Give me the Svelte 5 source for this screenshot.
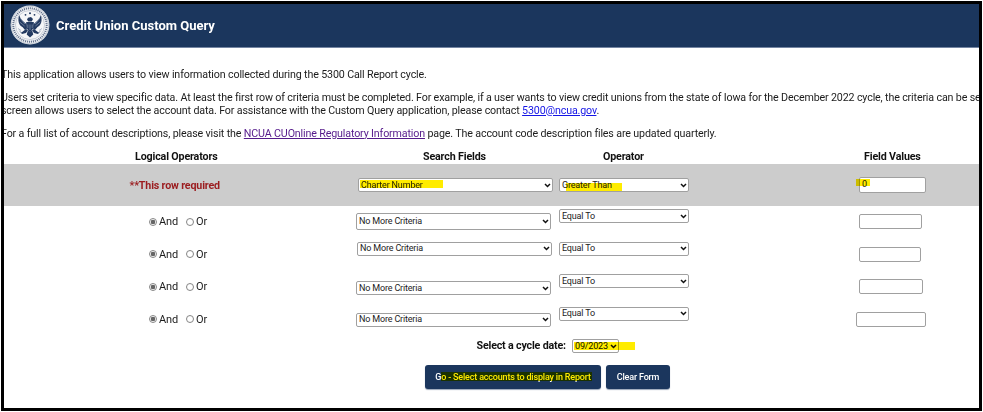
<script>
  const rows = [
    { field: 'No More Criteria', fx: 352, fy: 7, fh: 17, iw: 63, il: 4, iy: 8 },
    { field: 'No More Criteria', fx: 353, fy: 3, fh: 14, iw: 62, il: 4, iy: 8 },
    { field: 'No More Criteria', fx: 352, fy: 10, fh: 14, iw: 64, il: 4, iy: 8 },
    { field: 'No More Criteria', fx: 352, fy: 9, fh: 14, iw: 70, il: 1, iy: 8 }
  ];
</script>

{#snippet chevron()}
  <svg class="chev" width="7" height="5" viewBox="0 0 7 5"><path d="M1 1 3.5 3.5 6 1" fill="none" stroke="#111" stroke-width="1.5" /></svg>
{/snippet}

{#snippet dropdown(label)}
  <span class="label">{label}</span>{@render chevron()}
{/snippet}

<main>
  <header>
    <svg class="seal" width="40" height="40" viewBox="0 0 40 40">
      <circle cx="20" cy="20" r="19.4" fill="#f1f3f6" />
      <circle cx="20" cy="20" r="18.7" fill="none" stroke="#8995aa" stroke-width=".4" />
      <circle cx="20" cy="20" r="16.7" fill="none" stroke="#66748e" stroke-width="2" stroke-dasharray="1.1 .9" />
      <circle cx="20" cy="20" r="14.5" fill="#f5f6f8" stroke="#8a96aa" stroke-width=".4" />
      <g fill="#233a61">
        <circle cx="20" cy="8.3" r="1" /><circle cx="15.5" cy="9.8" r=".9" /><circle cx="24.5" cy="9.8" r=".9" />
        <path d="M9.2 10.2C7.5 15 8.5 20 12.7 22.3L15 25 17 23.5 16 18.7C13.4 16.7 10.5 14 9.2 10.2Z" />
        <path d="M30.8 10.2C32.5 15 31.5 20 27.3 22.3L25 25 23 23.5 24 18.7C26.6 16.7 29.5 14 30.8 10.2Z" />
        <path d="M18 12.7 21 12 23 14 21.7 16.5H18.3L17 14.6Z" />
        <path d="M16.2 17H23.8V22.8L20 27 16.2 22.8Z" />
        <path d="M18 25 20 26.5 22 25 23.3 29.5 20 32.5 16.7 29.5Z" />
        <path d="M16 24 11.5 27.5 8.5 25 12 29 16 28 18 25ZM24 24 28.5 27.5 31.5 25 28 29 24 28 22 25Z" />
      </g>
      <path d="M10 13 15 19M9.7 17 14.6 21M30 13 25 19M30.3 17 25.4 21M17.8 19.5V23M20 19.5V25M22.2 19.5V23M8 23.5 11 25.5M32 23.5 29 25.5" fill="none" stroke="#8c9bb4" stroke-width=".65" />
    </svg>
    <h1>Credit Union Custom Query</h1>
  </header>

  <section class="intro">
    <p>This application allows users to view information collected during the 5300 Call Report cycle.</p>
    <p>Users set criteria to view specific data. At least the first row of criteria must be completed. For example, if a user wants to view credit unions from the state of Iowa for the December 2022 cycle, the criteria can be se<br />screen allows users to select the account data. For assistance with the Custom Query application, please contact <a class="mail" href="#mail">5300@ncua.gov</a>.</p>
    <p>For a full list of account descriptions, please visit the <a class="visited" href="#info">NCUA CUOnline Regulatory Information</a> page. The account code description files are updated quarterly.</p>
  </section>

  <div class="row head">
    <b>Logical Operators</b><b>Search Fields</b><b>Operator</b><b>Field Values</b>
  </div>

  <div class="row required">
    <div class="note">**This row required</div>
    <div class="field"><div class="select" style="margin-left:2px;margin-top:14px">{@render dropdown('Charter Number')}<i class="hl" style="left:1px;top:1px;width:83px;height:8px"></i></div></div>
    <div class="op"><div class="select" style="margin-top:14px">{@render dropdown('Greater Than')}<i class="hl" style="left:6px;top:4px;width:56px;height:8px"></i></div></div>
    <div class="value"><div class="input" style="width:67px;height:16px;margin-left:4px;margin-top:13px">0<i class="hl" style="left:-4px;top:1px;width:14px;height:7px"></i></div></div>
  </div>

  {#each rows as r}
    <div class="row criteria">
      <div class="logic"><span class="radio on"></span><span class="and">And</span><span class="radio"></span><span>Or</span></div>
      <div class="field"><div class="select" style="margin-left:{r.fx - 352}px;margin-top:{r.fy}px;height:{r.fh}px">{@render dropdown(r.field)}</div></div>
      <div class="op"><div class="select" style="margin-top:3px">{@render dropdown('Equal To')}</div></div>
      <div class="value"><div class="input" style="width:{r.iw}px;margin-left:{r.il}px;margin-top:{r.iy}px"></div></div>
    </div>
  {/each}

  <div class="cycle">
    <b>Select a cycle date:</b>
    <div class="select date">{@render dropdown('09/2023')}<i class="hl" style="left:1px;top:2px;width:61px;height:8px"></i></div>
  </div>

  <div class="actions">
    <button class="go"><span>Go - Select accounts to display in Report</span><i class="hl" style="left:16px;top:7px;width:151px;height:9px"></i></button>
    <button class="clear"><span>Clear Form</span></button>
  </div>
</main>

<style>
  :global(body) { background: #fff; }
  main {
    box-sizing: border-box; width: 981px; height: 410px; margin: 1px 0 0 1px;
    border: 3px solid #000; overflow: hidden; background: #fff; color: #1c1c1c;
    font: 10.7px/13px Roboto, "Liberation Sans", sans-serif; letter-spacing: -.15px;
  }
  header { height: 43px; background: #1b365d; border-bottom: 1px solid #7485a2; display: flex; align-items: center; padding-left: 6px; }
  .seal { flex: none; margin-top: -1px; }
  h1 { margin: 0 0 0 6px; color: #fff; font-size: 13px; line-height: 16px; font-weight: 700; white-space: nowrap; letter-spacing: 0; }
  .intro { height: 97px; padding-top: 20px; box-sizing: border-box; }
  p { margin: 0 0 9.8px -3px; white-space: nowrap; }
  a.mail { color: #1414e6; }
  a.visited { color: #551a8b; }
  .row { display: grid; grid-template-columns: 352px 203px 200px 220px; box-sizing: border-box; }
  .head { height: 19px; padding-top: 5px; color: #111; }
  .head b { line-height: 14px; }
  .head b:nth-child(1) { padding-left: 131px; }
  .head b:nth-child(2) { padding-left: 67px; }
  .head b:nth-child(3) { padding-left: 44px; }
  .head b:nth-child(4) { padding-left: 105px; }
  .required { height: 42px; background: #ccc; }
  .note { color: #9b1c1f; font-weight: 700; padding: 15px 0 0 125.5px; letter-spacing: -.17px; }
  .criteria { height: 32.5px; }
  .value { padding-left: 96px; }
  .select, .input {
    position: relative; box-sizing: border-box; border: 1px solid #a0a0a0; border-radius: 2px;
    background: #fff; font-size: 9px; line-height: 11px; letter-spacing: -.17px;
  }
  .select { display: flex; align-items: center; justify-content: space-between; padding: 0 1px 0 2px; height: 14px; }
  .label { white-space: nowrap; }
  .field .select { width: 195px; }
  .op .select { width: 130px; }
  .op, .field { min-width: 0; }
  .input { height: 15px; padding: 1px 2px; }
  .chev { flex: none; }
  .hl { position: absolute; background: #ffec00; mix-blend-mode: multiply; }
  .logic { display: flex; align-items: center; align-self: start; height: 13px; padding: 9px 0 0 145px; font-size: 11px; letter-spacing: -.1px; }
  .radio { box-sizing: border-box; width: 8px; height: 8px; border: 1px solid #858585; border-radius: 50%; margin-right: 2px; }
  .radio.on { background: radial-gradient(circle, #666 0 2px, #fff 2.6px); }
  .and { width: 19px; margin-right: 8px; }
  .cycle { height: 23px; display: flex; align-items: flex-start; padding: 3px 0 0 472.5px; box-sizing: border-box; color: #111; }
  .cycle b { width: 95.5px; letter-spacing: -.18px; }
  .date { width: 47px; }
  .actions { display: flex; gap: 5px; padding: 6px 0 0 421px; }
  button { position: relative; box-sizing: border-box; height: 24px; border: 0; border-radius: 3px; background: #1b365d; color: #fff; font: 500 9px/11px Roboto, sans-serif; letter-spacing: -.18px; padding: 0; white-space: nowrap; box-shadow: 0 1px 1px #9aa6b8; }
  .go { width: 176px; }
  .clear { width: 64px; }
</style>
